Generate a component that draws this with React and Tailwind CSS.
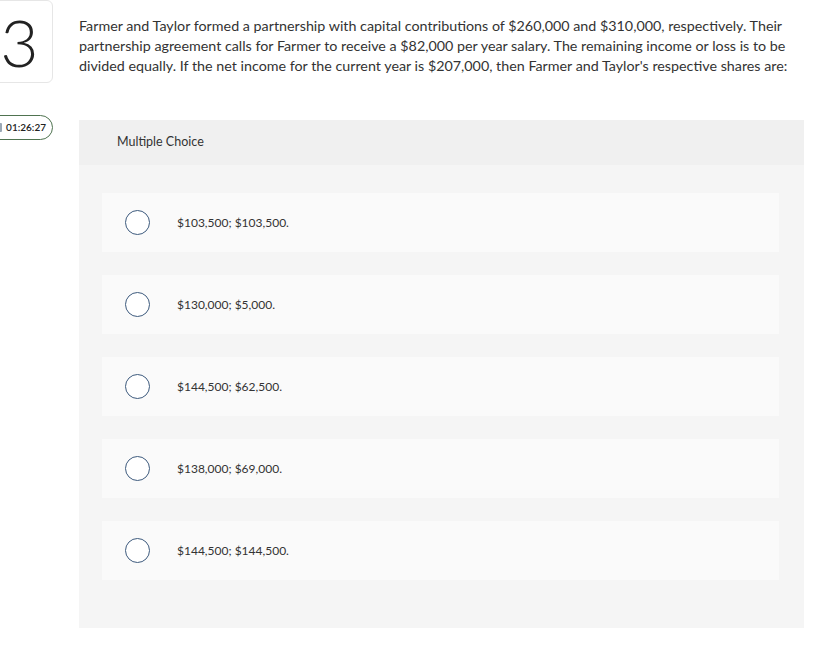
import React from "react";

const options = [
  "$103,500; $103,500.",
  "$130,000; $5,000.",
  "$144,500; $62,500.",
  "$138,000; $69,000.",
  "$144,500; $144,500.",
];

export default function App() {
  return (
    <div className="w-[827px] h-[670px] bg-white overflow-hidden flex text-[#333]" style={{ fontFamily: "Lato, 'Open Sans', sans-serif" }}>
      <div className="w-[79px] shrink-0 flex flex-col">
        <div className="ml-[-17px] w-[70px] h-[83px] border border-[#e6e6e6] rounded-md flex items-center justify-center">
          <span className="text-[66px] font-light leading-none text-[#222] ml-[3px]">3</span>
        </div>
        <div className="relative mt-[32px] ml-[-30px] w-[83px] h-[25px] border border-[#4f7350] rounded-full flex items-center justify-end pr-[6px]">
          <span className="absolute left-[28px] top-[7px] w-[3px] h-[9px] bg-[#9aa7b4] rounded-[1px]" />
          <span className="text-[10px] font-semibold text-[#222]">01:26:27</span>
        </div>
      </div>
      <div className="w-[725px] shrink-0">
        <p className="pt-[16px] text-[14.3px] leading-[20px] text-[#333]">
          Farmer and Taylor formed a partnership with capital contributions of $260,000 and $310,000, respectively. Their partnership agreement calls for Farmer to receive a $82,000 per year salary. The remaining income or loss is to be divided equally. If the net income for the current year is $207,000, then Farmer and Taylor's respective shares are:
        </p>
        <div className="mt-[44px] h-[508px] bg-[#f5f5f5]">
          <div className="h-[45px] bg-[#f0f0f0] flex items-center pl-[38px]">
            <span className="text-[12.5px] text-[#333]">Multiple Choice</span>
          </div>
          <div className="pt-[28px] pl-[23px] pr-[25px] flex flex-col gap-[23px]">
            {options.map((o) => (
              <div key={o} className="h-[59px] bg-[#fafafa] flex items-center">
                <div className="ml-[23px] w-[25px] h-[25px] rounded-full border-[1.5px] border-[#3d5a7d] bg-white shrink-0" />
                <span className="ml-[27px] text-[12px] text-[#333]">{o}</span>
              </div>
            ))}
          </div>
        </div>
      </div>
    </div>
  );
}
